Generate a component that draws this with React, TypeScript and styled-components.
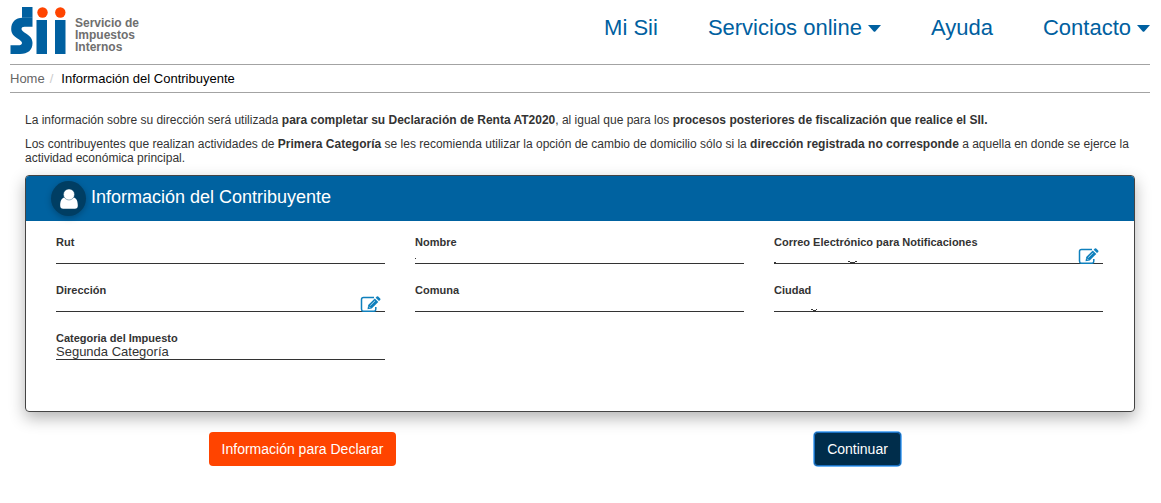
import React from "react";
import styled, { createGlobalStyle } from "styled-components";

const GlobalStyle = createGlobalStyle`
  * { box-sizing: border-box; }
  body {
    margin: 0;
    background: #fff;
    color: #333;
    font-family: "Liberation Sans", Arial, Helvetica, sans-serif;
    font-size: 12px;
    line-height: 14px;
  }
  button, input { font-family: inherit; }
`;

const Page = styled.div`
  padding: 0 11px 32px 10px;
`;

const Header = styled.header`
  display: flex;
  justify-content: space-between;
  align-items: flex-start;
  height: 64px;
`;

const Brand = styled.a`
  display: flex;
  gap: 9px;
  padding-top: 7px;
  color: #6f6f6f;
  text-decoration: none;
`;

const BrandName = styled.span`
  padding-top: 10px;
  font-size: 12px;
  line-height: 12px;
  font-weight: bold;
`;

const Nav = styled.nav`
  display: flex;
  gap: 50px;
  padding-top: 16px;
`;

const NavLink = styled.a`
  display: flex;
  align-items: center;
  gap: 6px;
  color: #0060a0;
  font-size: 22px;
  line-height: 24px;
  text-decoration: none;
`;

const Breadcrumb = styled.ol`
  display: flex;
  align-items: center;
  height: 29px;
  margin: 0;
  padding: 0;
  list-style: none;
  border: solid #a3a3a3;
  border-width: 1px 0;
  font-size: 13px;
  color: #000;

  a { color: #666; text-decoration: none; }
`;

const Separator = styled.li`
  padding: 0 8px 0 5px;
  color: #ccc;
`;

const Main = styled.main`
  padding: 20px 15px 0;
`;

const Paragraph = styled.p`
  margin: 0 0 10px;
`;

const Card = styled.section`
  border: 1px solid #444;
  border-radius: 4px;
  box-shadow: 0 6px 16px rgba(0, 0, 0, 0.3);
`;

const CardHeader = styled.div`
  display: flex;
  align-items: center;
  gap: 5px;
  height: 45px;
  padding-left: 25px;
  border-radius: 3px 3px 0 0;
  background: #0062a0;
  color: #fff;
`;

const Avatar = styled.span`
  display: flex;
  align-items: center;
  justify-content: center;
  width: 35px;
  height: 35px;
  border-radius: 50%;
  background: #003e63;
  box-shadow: 0 2px 6px rgba(0, 0, 0, 0.25);
`;

const CardTitle = styled.h1`
  margin: 0;
  padding-bottom: 3px;
  font-size: 18px;
  line-height: 20px;
  font-weight: normal;
`;

const Fields = styled.div`
  display: grid;
  grid-template-columns: repeat(3, 1fr);
  gap: 20px 30px;
  padding: 15px 31px 51px 30px;
`;

const FieldBox = styled.div`
  position: relative;
  display: flex;
  flex-direction: column;
`;

const Label = styled.label`
  font-size: 11px;
  line-height: 13px;
  font-weight: bold;
`;

const Value = styled.input`
  width: 100%;
  height: 15px;
  padding: 0 0 2px;
  border: 0;
  border-bottom: 1px solid #333;
  background: transparent;
  color: #333;
  font-size: 13px;
  line-height: 14px;
  outline: none;
`;

const EditButton = styled.button`
  position: absolute;
  right: 4px;
  bottom: 0;
  display: flex;
  padding: 0;
  border: 0;
  background: transparent;
  cursor: pointer;
`;

const Traces = styled.svg`
  position: absolute;
  left: 0;
  bottom: 0;
`;

const Actions = styled.div`
  display: grid;
  grid-template-columns: 1fr 1fr;
  justify-items: center;
  padding-top: 20px;
`;

const ActionButton = styled.button<{ $primary?: boolean }>`
  height: 34px;
  padding: 0 13px;
  border: 0;
  border-radius: 4px;
  background: ${(p) => (p.$primary ? "#002d4b" : "#ff4400")};
  box-shadow: ${(p) => (p.$primary ? "inset 0 0 0 1px #1a6fc0, 0 0 0 1px #6cb4f5" : "none")};
  color: #fff;
  font-size: 14px;
  line-height: 20px;
  cursor: pointer;
`;

const Logo = () => (
  <svg width="56" height="47" viewBox="0 0 56 47" aria-hidden="true">
    <rect x="12" y="0" width="10.500" height="10.800" fill="#0060a0" />
    <path
      d="M12.500 10.700H22.500V19.800H14.500C12.500 19.800 11.500 20.600 11.500 22C11.500 23.500 13 24.500 16 26.500C20 29 22.500 31.500 22.500 36C22.500 43 18 47 10 47H.5V38.300H8C10.500 38.300 12 37.800 12 36C12 34.500 10.500 33.500 7.500 31.500C3.500 29 1.200 26.500 1.200 22C1.200 15 5.500 10.700 12.500 10.700Z"
      fill="#0060a0"
    />
    <rect x="26.500" y="13" width="10.500" height="34" fill="#0060a0" />
    <rect x="45" y="13" width="10.500" height="34" fill="#0060a0" />
    <circle cx="32.500" cy="5.500" r="5.200" fill="#ff4400" />
    <circle cx="50.300" cy="5.500" r="5.200" fill="#ff4400" />
  </svg>
);

const Caret = () => (
  <svg width="13" height="7" viewBox="0 0 13 7" aria-hidden="true">
    <path d="M0 0H13L7.500 6.300Q6.500 7.300 5.500 6.300Z" fill="#0060a0" />
  </svg>
);

const UserIcon = () => (
  <svg width="18" height="20" viewBox="0 0 18 20" aria-hidden="true">
    <path d="M4.500 8.500C1.200 9 .2 12.500 .2 16.500Q.2 19.700 3.200 19.700H14.800Q17.800 19.700 17.800 16.500C17.800 12.500 16.800 9 13.500 8.500Q9 12.500 4.500 8.500Z" fill="#fff" />
    <circle cx="9" cy="5.500" r="5.500" fill="#fff" stroke="#003e63" strokeWidth=".4" />
  </svg>
);

const EditIcon = () => (
  <svg width="21" height="16" viewBox="0 0 21 16" aria-hidden="true">
    <path d="M14 1.500H3.500Q1.500 1.500 1.500 3.500V13Q1.500 15.300 3.500 15.300H14Q15.800 15.300 15.800 13V11" fill="none" stroke="#0f80bd" strokeWidth="1.500" />
    <path d="M7.500 13.200L8.200 9L14.800 2.400L18.300 5.900L11.700 12.500Z" fill="#0f80bd" />
    <path d="M15.600 1.700L16.800 .6Q17.500 0 18.200 .6L20.200 2.600Q20.800 3.200 20.200 3.900L19 5.100Z" fill="#0f80bd" />
    <path d="M10.200 9.600L15 4.800M9 10.700L10.200 11.900" stroke="#fff" strokeWidth=".7" />
  </svg>
);

type FieldProps = {
  id: string;
  label: string;
  value?: string;
  editable?: boolean;
  traces?: string;
};

const Field = ({ id, label, value = "", editable, traces }: FieldProps) => (
  <FieldBox>
    <Label htmlFor={id}>{label}</Label>
    <Value id={id} value={value} readOnly />
    {traces && (
      <Traces width="90" height="8" viewBox="0 0 90 8" aria-hidden="true">
        <path d={traces} fill="none" stroke="#333" />
      </Traces>
    )}
    {editable && (
      <EditButton type="button" aria-label={`Editar ${label}`}>
        <EditIcon />
      </EditButton>
    )}
  </FieldBox>
);

export default function App() {
  return (
    <>
      <GlobalStyle />
      <Page>
        <Header>
          <Brand href="#">
            <Logo />
            <BrandName>
              Servicio de
              <br />
              Impuestos
              <br />
              Internos
            </BrandName>
          </Brand>
          <Nav>
            <NavLink href="#">Mi Sii</NavLink>
            <NavLink href="#">
              Servicios online <Caret />
            </NavLink>
            <NavLink href="#">Ayuda</NavLink>
            <NavLink href="#">
              Contacto <Caret />
            </NavLink>
          </Nav>
        </Header>
        <Breadcrumb>
          <li>
            <a href="#">Home</a>
          </li>
          <Separator aria-hidden="true">/</Separator>
          <li>Información del Contribuyente</li>
        </Breadcrumb>
        <Main>
          <Paragraph>
            La información sobre su dirección será utilizada <b>para completar su Declaración de Renta AT2020</b>, al
            igual que para los <b>procesos posteriores de fiscalización que realice el SII.</b>
          </Paragraph>
          <Paragraph>
            Los contribuyentes que realizan actividades de <b>Primera Categoría</b> se les recomienda utilizar la opción
            de cambio de domicilio sólo si la <b>dirección registrada no corresponde</b> a aquella en donde se ejerce la
            actividad económica principal.
          </Paragraph>
          <Card>
            <CardHeader>
              <Avatar>
                <UserIcon />
              </Avatar>
              <CardTitle>Información del Contribuyente</CardTitle>
            </CardHeader>
            <Fields>
              <Field id="rut" label="Rut" />
              <Field id="nombre" label="Nombre" traces="M0 2.500H1" />
              <Field
                id="correo"
                label="Correo Electrónico para Notificaciones"
                editable
                traces="M0 6.500H2M74 5.500H76M76 6.500H81M81 5.500H83"
              />
              <Field id="direccion" label="Dirección" editable />
              <Field id="comuna" label="Comuna" />
              <Field id="ciudad" label="Ciudad" traces="M37 5.500H39M39 6.500H42M42 5.500H43" />
              <Field id="categoria" label="Categoria del Impuesto" value="Segunda Categoría" />
            </Fields>
          </Card>
          <Actions>
            <ActionButton type="button">Información para Declarar</ActionButton>
            <ActionButton type="button" $primary>
              Continuar
            </ActionButton>
          </Actions>
        </Main>
      </Page>
    </>
  );
}
